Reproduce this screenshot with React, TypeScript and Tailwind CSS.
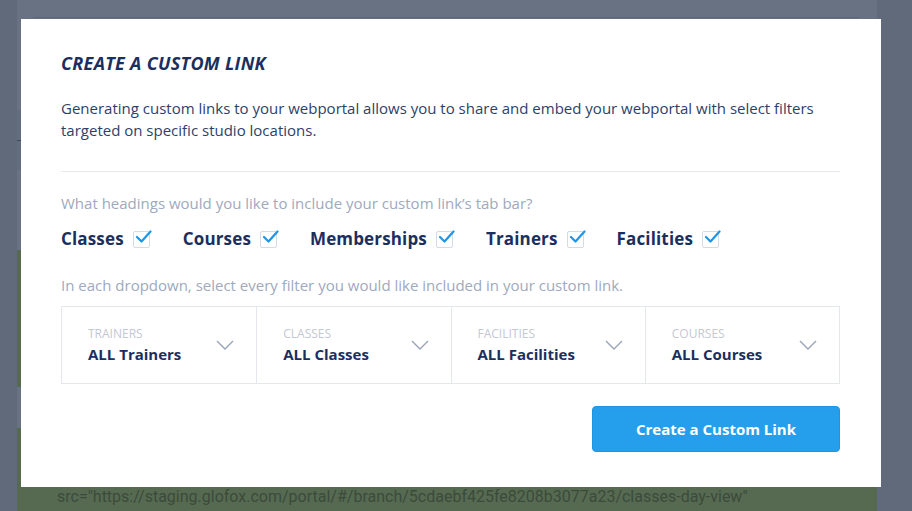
import React from "react";

const Check = () => (
  <span className="inline-flex items-center justify-center w-[17px] h-[17px] border border-[#d5dae4] rounded-[2px] bg-white relative">
    <svg width="18" height="14" viewBox="0 0 18 14" className="absolute left-[1px] top-[-2px]">
      <path d="M2 7 L6.5 11.5 L15.5 1.5" fill="none" stroke="#1e96e8" strokeWidth="2.2" strokeLinecap="round" strokeLinejoin="round" />
    </svg>
  </span>
);

const Chevron = () => (
  <svg width="18" height="10" viewBox="0 0 18 10">
    <path d="M1 1 L9 9 L17 1" fill="none" stroke="#9aa3b8" strokeWidth="1.4" />
  </svg>
);

export default function App() {
  const headings = ["Classes", "Courses", "Memberships", "Trainers", "Facilities"];
  const dropdowns = [
    ["TRAINERS", "ALL Trainers"],
    ["CLASSES", "ALL Classes"],
    ["FACILITIES", "ALL Facilities"],
    ["COURSES", "ALL Courses"],
  ];
  return (
    <div className="relative w-[912px] h-[511px] overflow-hidden bg-[#606a7a]" style={{ fontFamily: "'Open Sans', sans-serif" }}>
      {/* background page */}
      <div className="absolute left-[17px] top-0 w-[860px] h-[511px] bg-[#687283]">
        <div className="absolute left-[16px] top-[17px] w-[826px] h-px bg-[#5c6678]" />
        <div className="absolute left-0 top-[110px] w-[5px] h-[60px] bg-[#636d80]" />
        <div className="absolute left-0 top-[140px] w-[5px] h-px bg-[#3d4a66]" />
        <div className="absolute left-0 top-[250px] w-[5px] h-[137px] bg-[#566a52]" />
        <div className="absolute left-0 top-[428px] w-[860px] h-[83px] bg-[#566a52]">
          <div className="absolute left-[40px] top-[57px] text-[16px] text-[#3c4a3a]" style={{ fontFamily: "'Roboto', sans-serif" }}>
            src="https://staging.glofox.com/portal/#/branch/5cdaebf425fe8208b3077a23/classes-day-view"
          </div>
        </div>
      </div>
      {/* modal */}
      <div className="absolute left-[21px] top-[19px] w-[860px] h-[468px] bg-white px-[40px] pt-[34px]">
        <h2 className="text-[18px] font-bold italic text-[#1b2f5e] leading-[20px] tracking-[0.3px]">CREATE A CUSTOM LINK</h2>
        <p className="mt-[24px] text-[15px] leading-[22px] text-[#2d3f6a]">
          Generating custom links to your webportal allows you to share and embed your webportal with select filters targeted on specific studio locations.
        </p>
        <div className="mt-[30px] h-px bg-[#e6e8ee] w-[779px]" />
        <p className="mt-[20px] text-[15px] leading-[22px] text-[#a0a9bd]">What headings would you like to include your custom link’s tab bar?</p>
        <div className="mt-[13px] flex items-center gap-[33px] h-[24px]">
          {headings.map((h) => (
            <div key={h} className="flex items-center gap-[9px]">
              <span className="text-[17px] font-bold text-[#1b2f5e] tracking-[0.15px]">{h}</span>
              <Check />
            </div>
          ))}
        </div>
        <p className="mt-[23px] text-[15px] leading-[22px] text-[#a0a9bd]">In each dropdown, select every filter you would like included in your custom link.</p>
        <div className="mt-[10px] w-[779px] h-[78px] grid grid-cols-4 border border-[#e5e7ee]">
          {dropdowns.map(([l, v], i) => (
            <div key={l} className={`flex items-center justify-between pl-[26px] pr-[22px] ${i > 0 ? "border-l border-[#e5e7ee]" : ""}`}>
              <div className="flex flex-col">
                <span className="text-[12px] leading-[14px] text-[#c3c8d4]">{l}</span>
                <span className="mt-[4px] text-[15px] leading-[18px] font-bold text-[#1b2f5e]">{v}</span>
              </div>
              <Chevron />
            </div>
          ))}
        </div>
        <div className="mt-[22px] w-[779px] flex justify-end">
          <button className="w-[248px] h-[46px] rounded-[4px] bg-[#259fec] border border-[#1e94e2] text-white text-[15px] font-bold">
            Create a Custom Link
          </button>
        </div>
      </div>
    </div>
  );
}
